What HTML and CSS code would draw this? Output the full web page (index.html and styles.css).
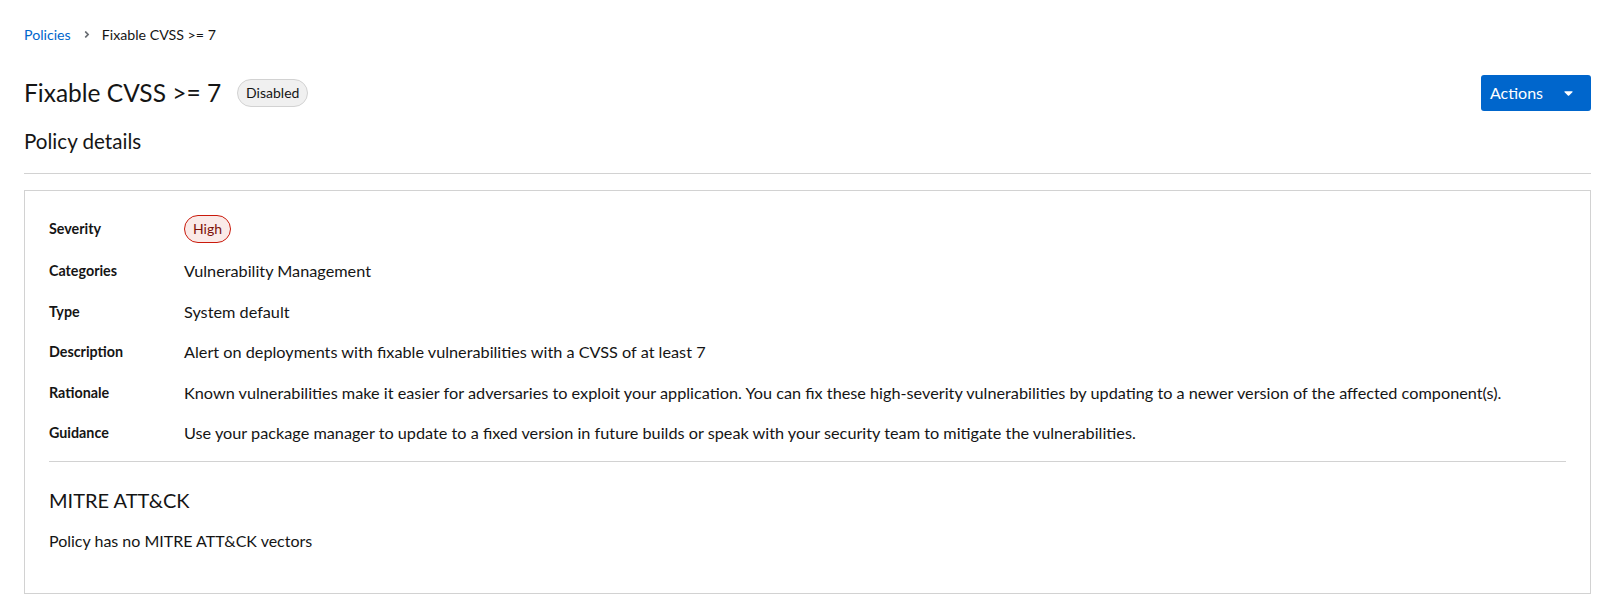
FILE: index.html
```html
<!DOCTYPE html>
<html lang="en">
<head>
<meta charset="utf-8">
<title>Fixable CVSS >= 7</title>
<link rel="stylesheet" href="styles.css">
</head>
<body>
<main class="page">
  <nav class="breadcrumb">
    <a class="crumb-link" href="#">Policies</a>
    <svg class="crumb-sep" viewBox="0 0 256 512" width="6" height="11" aria-hidden="true"><path fill="currentColor" d="M224.3 273l-136 136c-9.4 9.4-24.6 9.4-33.9 0l-22.6-22.6c-9.4-9.4-9.4-24.6 0-33.9l96.4-96.4-96.4-96.4c-9.4-9.4-9.4-24.6 0-33.9L54.3 103c9.4-9.4 24.6-9.4 33.9 0l136 136c9.5 9.4 9.5 24.6.1 34z"/></svg>
    <span class="crumb-current">Fixable CVSS &gt;= 7</span>
  </nav>

  <header class="title-row">
    <div class="title-group">
      <h1 class="title">Fixable CVSS &gt;= 7</h1>
      <span class="label label-grey">Disabled</span>
    </div>
    <button class="actions-btn" type="button">
      <span>Actions</span>
      <svg class="caret" viewBox="0 0 320 512" width="9" height="14" aria-hidden="true"><path fill="currentColor" d="M31.3 192h257.3c17.8 0 26.7 21.5 14.1 34.1L174.1 354.8c-7.8 7.8-20.5 7.8-28.3 0L17.2 226.1C4.6 213.5 13.5 192 31.3 192z"/></svg>
    </button>
  </header>

  <h2 class="section-title">Policy details</h2>
  <hr class="divider">

  <section class="card">
    <dl class="details">
      <dt>Severity</dt>
      <dd><span class="label label-red">High</span></dd>
      <dt>Categories</dt>
      <dd>Vulnerability Management</dd>
      <dt>Type</dt>
      <dd>System default</dd>
      <dt>Description</dt>
      <dd>Alert on deployments with fixable vulnerabilities with a CVSS of at least 7</dd>
      <dt>Rationale</dt>
      <dd>Known vulnerabilities make it easier for adversaries to exploit your application. You can fix these high-severity vulnerabilities by updating to a newer version of the affected component(s).</dd>
      <dt>Guidance</dt>
      <dd>Use your package manager to update to a fixed version in future builds or speak with your security team to mitigate the vulnerabilities.</dd>
    </dl>
    <hr class="inner-divider">
    <h3 class="mitre-title">MITRE ATT&amp;CK</h3>
    <p class="mitre-text">Policy has no MITRE ATT&amp;CK vectors</p>
  </section>
</main>
</body>
</html>
```

FILE: styles.css
```css
* { box-sizing: border-box; }

html, body {
  margin: 0;
  padding: 0;
  background: #ffffff;
}

body {
  font-family: Lato, "Liberation Sans", sans-serif;
  color: #151515;
  font-size: 16px;
}

.page {
  padding: 0 19px 0 24px;
}

.breadcrumb {
  display: flex;
  align-items: center;
  height: 21px;
  margin-top: 24px;
  font-size: 14.2px;
  line-height: 21px;
}

.crumb-link {
  color: #0066cc;
  text-decoration: none;
}

.crumb-sep {
  color: #6a6e73;
  margin: 0 12px 0 13px;
}

.crumb-current {
  color: #151515;
}

.title-row {
  display: flex;
  align-items: center;
  justify-content: space-between;
  height: 36px;
  margin-top: 30px;
}

.title-group {
  display: flex;
  align-items: center;
  gap: 16px;
}

.title {
  margin: 0;
  font-size: 24.5px;
  font-weight: 400;
  line-height: 30px;
}

.label {
  display: inline-flex;
  align-items: center;
  height: 28px;
  padding: 0 8px;
  border-radius: 14px;
  font-size: 14px;
  line-height: 20px;
  border: 1px solid;
}

.label-grey {
  background: #f0f0f0;
  border-color: #d2d2d2;
  color: #151515;
}

.label-red {
  background: #faeae8;
  border-color: #c9190b;
  color: #7d1007;
}

.actions-btn {
  display: flex;
  align-items: center;
  gap: 21px;
  height: 36px;
  width: 110px;
  padding: 0 0 1px 9px;
  background: #0066cc;
  color: #ffffff;
  border: none;
  border-radius: 3px;
  font-family: inherit;
  font-size: 16px;
}

.caret {
  display: block;
}

.section-title {
  margin: 15px 0 0;
  font-size: 20.6px;
  font-weight: 400;
  line-height: 30px;
}

.divider {
  margin: 17px 0 0;
  border: 0;
  border-top: 1px solid #d2d2d2;
  height: 0;
}

.card {
  margin-top: 16px;
  border: 1px solid #d2d2d2;
  padding: 24px 24px 40px;
}

.details {
  display: grid;
  grid-template-columns: 135px 1fr;
  row-gap: 16px;
  margin: 0;
  align-items: center;
}

.details dt {
  font-size: 14.3px;
  font-weight: 700;
  line-height: 24.5px;
}

.details dd {
  margin: 0;
  font-size: 16.25px;
  line-height: 24.5px;
}

.inner-divider {
  margin: 15px 0 0;
  border: 0;
  border-top: 1px solid #d2d2d2;
  height: 0;
}

.mitre-title {
  margin: 25px 0 0;
  font-size: 20px;
  font-weight: 400;
  line-height: 27px;
}

.mitre-text {
  margin: 15px 0 0;
  line-height: 24px;
}
```
